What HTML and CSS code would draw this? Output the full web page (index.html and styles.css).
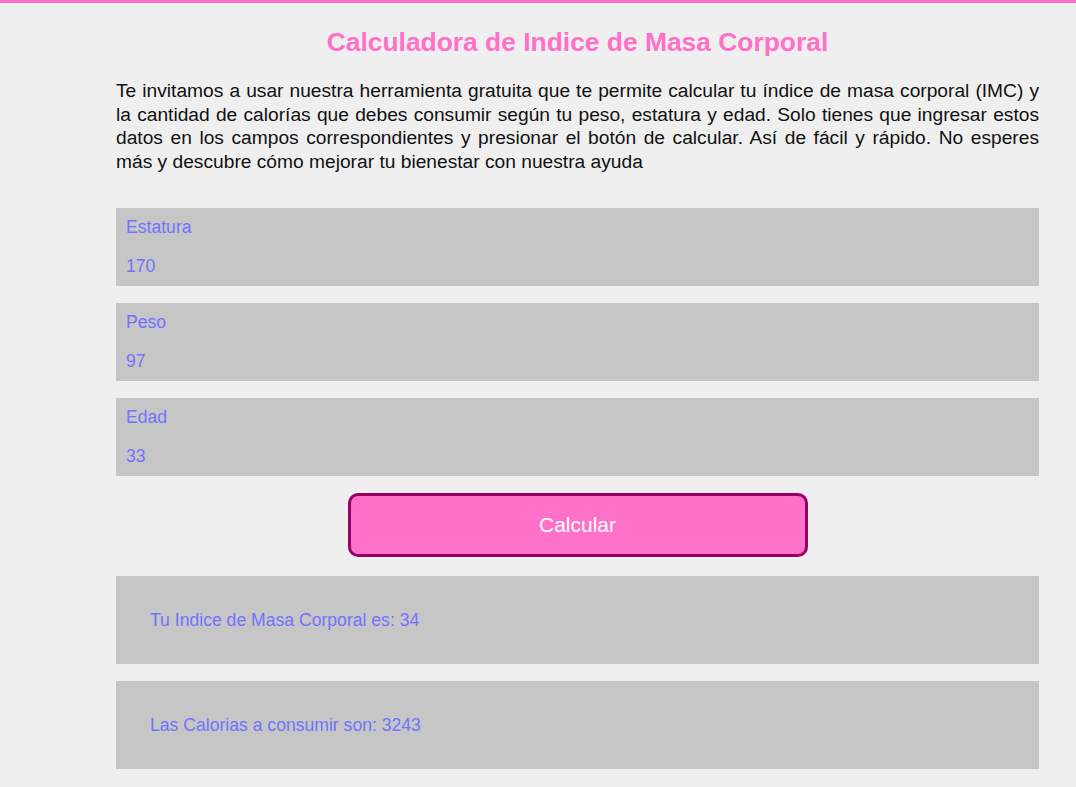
FILE: index.html
```html
<!DOCTYPE html>
<html lang="es">
<head>
<meta charset="utf-8">
<title>Calculadora IMC</title>
<link rel="stylesheet" href="styles.css">
</head>
<body>
<main class="page">
  <h1 class="title">Calculadora de Indice de Masa Corporal</h1>
  <p class="intro">Te invitamos a usar nuestra herramienta gratuita que te permite calcular tu índice de masa corporal (IMC) y la cantidad de calorías que debes consumir según tu peso, estatura y edad. Solo tienes que ingresar estos datos en los campos correspondientes y presionar el botón de calcular. Así de fácil y rápido. No esperes más y descubre cómo mejorar tu bienestar con nuestra ayuda</p>
  <form class="form">
    <div class="field">
      <label class="field-label" for="estatura">Estatura</label>
      <input class="field-input" id="estatura" type="text" value="170">
    </div>
    <div class="field">
      <label class="field-label" for="peso">Peso</label>
      <input class="field-input" id="peso" type="text" value="97">
    </div>
    <div class="field">
      <label class="field-label" for="edad">Edad</label>
      <input class="field-input" id="edad" type="text" value="33">
    </div>
    <button class="btn" type="button">Calcular</button>
    <div class="result">Tu Indice de Masa Corporal es: 34</div>
    <div class="result">Las Calorias a consumir son: 3243</div>
  </form>
</main>
</body>
</html>
```

FILE: styles.css
```css
html, body {
  margin: 0;
  padding: 0;
}
body {
  background: #efefef;
  border-top: 3px solid #ff70c8;
  font-family: "Liberation Sans", Arial, sans-serif;
  color: #111;
}
.page {
  width: 923px;
  margin-left: 116px;
  padding-top: 24px;
  padding-bottom: 18px;
}
.title {
  margin: 0;
  text-align: center;
  font-size: 26.4px;
  font-weight: bold;
  color: #ff70c8;
}
.intro {
  margin: 21px 0 0;
  font-size: 19.2px;
  line-height: 23.6px;
  text-align: justify;
}
.form {
  margin-top: 35px;
  display: flex;
  flex-direction: column;
  gap: 17.5px;
}
.field {
  background: #c6c6c6;
  padding: 9px 10px 9.5px;
  display: flex;
  flex-direction: column;
  gap: 19px;
}
.field-label {
  font-size: 17.6px;
  line-height: 20px;
  color: #7272ff;
}
.field-input {
  margin: 0;
  padding: 0;
  border: 0;
  outline: none;
  background: transparent;
  font-family: inherit;
  font-size: 17.6px;
  line-height: 20px;
  height: 20px;
  color: #7272ff;
}
.btn {
  align-self: center;
  width: 460px;
  height: 64px;
  margin-bottom: 1.5px;
  background: #ff70c8;
  border: 3px solid #990066;
  border-radius: 10px;
  color: #fff;
  font-family: inherit;
  font-size: 21px;
}
.result {
  background: #c6c6c6;
  padding: 33.75px 34px;
  font-size: 17.6px;
  line-height: 20px;
  color: #7272ff;
}
```
